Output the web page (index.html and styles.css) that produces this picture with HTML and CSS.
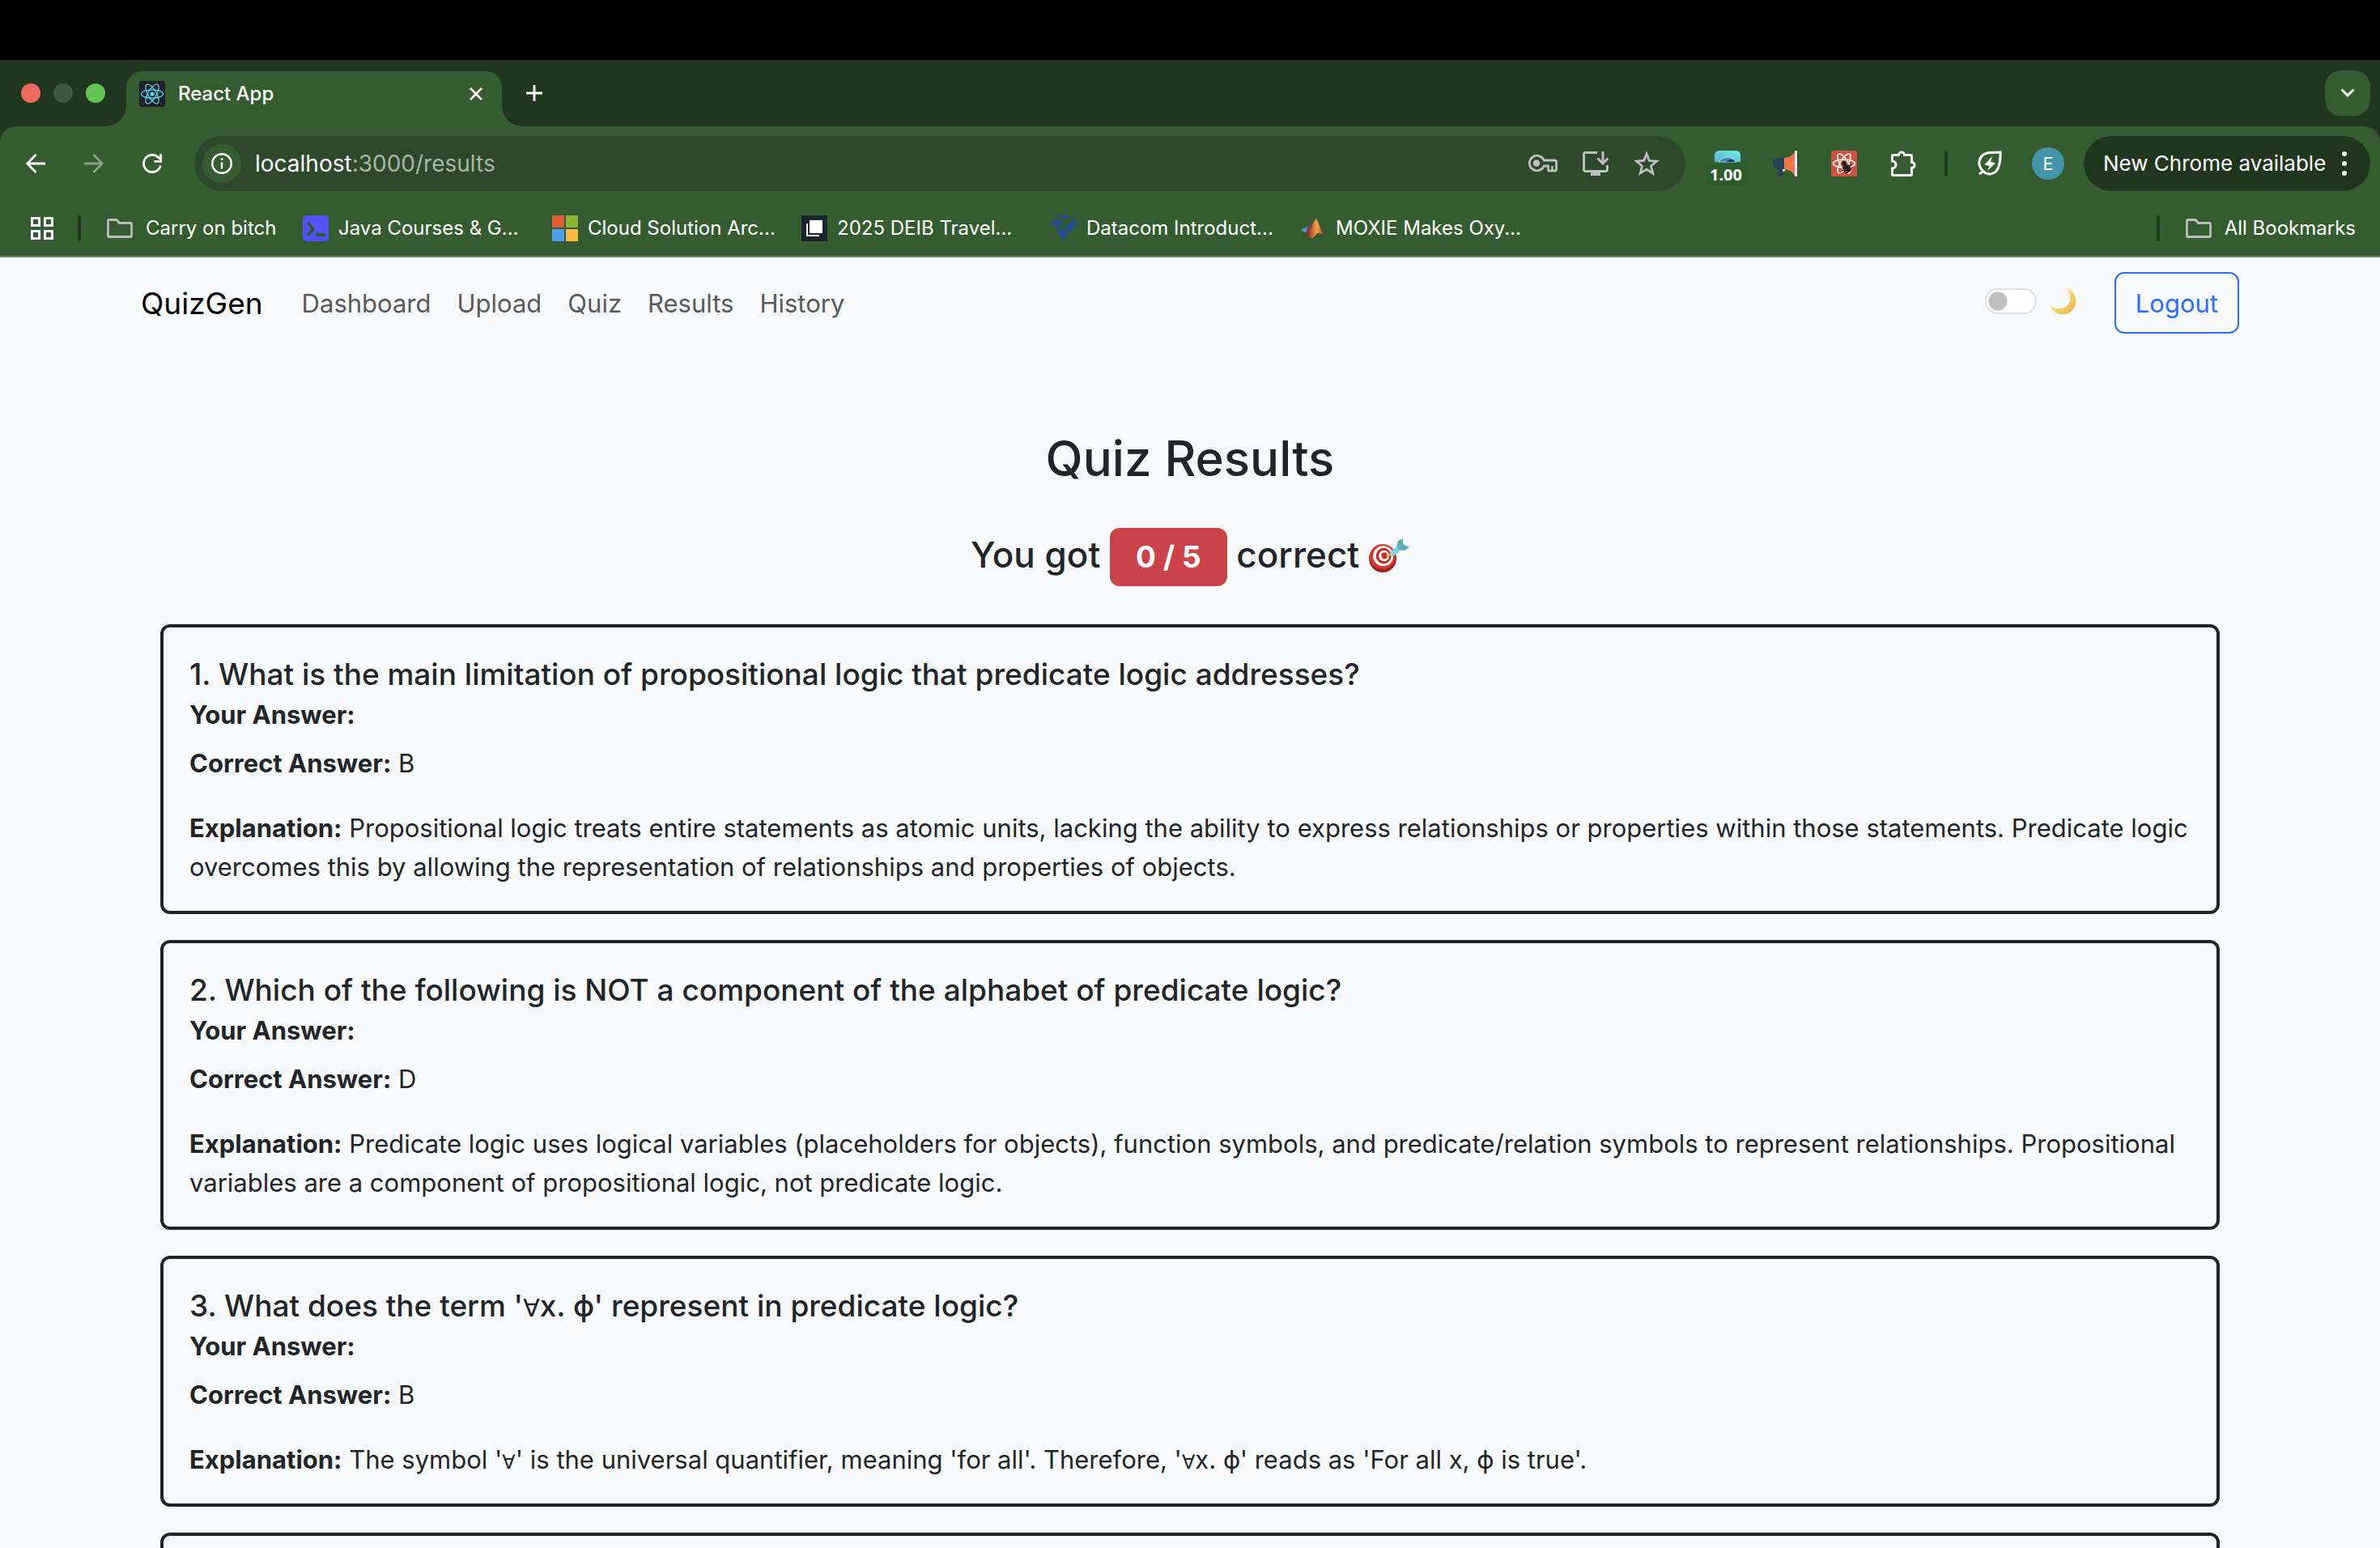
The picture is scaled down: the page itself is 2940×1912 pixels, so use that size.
FILE: index.html
```html
<!DOCTYPE html>
<html lang="en">
<head>
<meta charset="utf-8">
<meta name="viewport" content="width=device-width, initial-scale=1">
<title>React App</title>
<link rel="stylesheet" href="styles.css">
</head>
<body>
<div class="screen">
  <div class="menu-strip"></div>
  <header class="browser">
    <div class="tab-strip">
      <div class="lights">
        <span class="light light-close"></span>
        <span class="light light-min"></span>
        <span class="light light-max"></span>
      </div>
      <div class="tab">
        <svg class="icon" width="32" height="32" viewBox="0 0 32 32"><rect width="32" height="32" rx="3" fill="#20232a"/><g fill="none" stroke="#61dafb" stroke-width="1.2"><ellipse cx="16" cy="16" rx="13.5" ry="5.2"/><ellipse cx="16" cy="16" rx="13.5" ry="5.2" transform="rotate(60 16 16)"/><ellipse cx="16" cy="16" rx="13.5" ry="5.2" transform="rotate(120 16 16)"/></g><circle cx="16" cy="16" r="2.6" fill="#61dafb"/></svg>
        <span class="tab-title">React App</span>
        <button class="plain" aria-label="Close tab"><svg class="icon" width="16" height="16" viewBox="0 0 16 16"><path d="M1 1l14 14M15 1L1 15" stroke="#fff" stroke-width="2.6"/></svg></button>
      </div>
      <button class="plain new-tab" aria-label="New tab"><svg class="icon" width="20" height="20" viewBox="0 0 20 20"><path d="M10 0v20M0 10h20" stroke="#fff" stroke-width="2.8"/></svg></button>
      <button class="tab-search" aria-label="Search tabs"><svg class="icon" width="18" height="12" viewBox="0 0 18 12"><path d="M1.5 1.5L9 9l7.500-7.500" fill="none" stroke="#fff" stroke-width="3"/></svg></button>
    </div>
    <div class="toolbar">
      <div class="nav-buttons">
        <button class="plain" aria-label="Back"><svg class="icon" width="24" height="24" viewBox="0 0 24 24"><path d="M24 12H2M12.500 1L1.700 12l10.800 11" fill="none" stroke="#fff" stroke-width="2.8"/></svg></button>
        <button class="plain" aria-label="Forward"><svg class="icon" width="24" height="24" viewBox="0 0 24 24"><path d="M0 12h22M11.500 1l10.800 11-10.800 11" fill="none" stroke="#8aa184" stroke-width="2.8"/></svg></button>
        <button class="plain" aria-label="Reload"><svg class="icon" width="24" height="24" viewBox="0 0 24 24"><path d="M22.300 14.500A10.600 10.600 0 1 1 21 6.300" fill="none" stroke="#fff" stroke-width="2.8"/><path d="M22.600 0v9.400H14.500" fill="none" stroke="#fff" stroke-width="2.800"/></svg></button>
      </div>
      <div class="address">
        <span class="info"><svg class="icon" width="26" height="26" viewBox="0 0 26 26"><circle cx="13" cy="13" r="11.800" fill="none" stroke="#fff" stroke-width="2.400"/><path d="M13 11.500v8M13 6v3" stroke="#fff" stroke-width="2.400"/></svg></span>
        <span class="url">localhost<span class="url-path">:3000/results</span></span>
        <svg class="icon" width="36" height="24" viewBox="0 0 36 24"><path d="M18.800 8A9.300 9.300 0 1 0 18.800 15H24v4.500q0 1.500 1.500 1.500H32q2 0 2-2V10q0-2-2-2z" transform="translate(.5 0)" fill="none" stroke="#bdc1bd" stroke-width="2.800"/><circle cx="10" cy="11.500" r="4.300" fill="#bdc1bd"/><path d="M29.500 21v-6" stroke="#bdc1bd" stroke-width="2.500"/></svg>
        <svg class="icon" width="32" height="30" viewBox="0 0 32 30"><path d="M18 1.500H4Q1.500 1.500 1.500 4v18q0 2.500 2.500 2.500h24q2.500 0 2.500-2.500v-5" fill="none" stroke="#bdc1bd" stroke-width="3"/><path d="M10 25h12v5H10z" fill="#bdc1bd"/><path d="M25 0v14M18.500 8.500L25 15l6.500-6.500" fill="none" stroke="#bdc1bd" stroke-width="3"/></svg>
        <svg class="icon" width="32" height="32" viewBox="0 0 32 32"><path d="M16 4l3.300 8.400 9.200.7-7 5.900 2.200 9L16 23.200 8.300 28l2.200-9-7-5.900 9.200-.7z" fill="none" stroke="#bdc1bd" stroke-width="2.800"/></svg>
      </div>
      <div class="extensions">
        <span class="ext-counter"><svg class="icon" width="32" height="32" viewBox="0 0 32 32"><defs><linearGradient id="sky" x1="0" y1="1" x2="1" y2="0"><stop offset="0" stop-color="#5aaed0"/><stop offset="1" stop-color="#74efe0"/></linearGradient></defs><path d="M0 14V6q0-6 6-6h20q6 0 6 6v8z" fill="url(#sky)"/><path d="M5 14q4-5.500 11-5.500T27 14z" fill="#3f86b8" stroke="#8fdcea"/><path d="M14 14q4-4 9-2l2 2z" fill="#17306e"/></svg><span class="counter">1.00</span></span>
        <svg class="icon" width="32" height="32" viewBox="0 0 32 32"><circle cx="28.500" cy="16.500" r="3.500" fill="#2c3e58"/><path d="M14 9H7.500Q0 9.500 0 16t6 7v7q0 2 2 2h2q2 0 2-2v-7h2z" fill="#2c3e58"/><path d="M14 9q10-.5 14-9v32q-4-8-14-9z" fill="#f0764a"/><rect x="27" width="3" height="32" rx="1" fill="#e4e9f2"/><path d="M12 23h3v2.500h-3z" fill="#dfe8f5"/></svg>
        <svg class="icon" width="32" height="32" viewBox="0 0 32 32"><rect width="32" height="32" rx="2" fill="#cb5342"/><g fill="none" stroke="#fff" stroke-width="1.500"><ellipse cx="16" cy="16" rx="13.500" ry="5"/><ellipse cx="16" cy="16" rx="13.500" ry="5" transform="rotate(60 16 16)"/><ellipse cx="16" cy="16" rx="13.500" ry="5" transform="rotate(120 16 16)"/></g><path d="M17 19l6 7" stroke="#cb5342" stroke-width="9"/><g fill="#20201f"><circle cx="16" cy="16" r="2.800"/><ellipse cx="20" cy="22" rx="3.400" ry="5" transform="rotate(-42 20 22)"/></g><path d="M14 21l11-3M14 25l11-3M19 28l5-11M14 19l4 9" stroke="#20201f" stroke-width="1.200"/></svg>
        <svg class="icon" width="34" height="34" viewBox="0 0 34 34"><path d="M5 6.500h6.500a3.500 3.500 0 0 1 7 0H26q1.500 0 1.500 1.500v7.500a3.500 3.500 0 0 1 0 7V30q0 1.500-1.500 1.500H5q-1.500 0-1.500-1.500v-7a4.500 4.500 0 0 0 0-9V8q0-1.500 1.500-1.500z" fill="none" stroke="#fff" stroke-width="3"/></svg>
      </div>
      <span class="bar"></span>
      <svg class="icon leaf" width="30" height="32" viewBox="0 0 30 32"><path d="M2 29l5-3.500Q1 20 2 13 4 3 16 2.500L28 2q.5 8-1.500 16Q24 28 15.500 29 10 29 7 25.500" fill="none" stroke="#fff" stroke-width="3"/><path d="M18 7L8.500 17.500l6 1.500L12 25l10-9.500-6-1.700z" fill="#fff"/></svg>
      <span class="avatar">E</span>
      <button class="update">New Chrome available<svg class="icon" width="6" height="30" viewBox="0 0 6 30"><g fill="#fff"><circle cx="3" cy="3" r="3"/><circle cx="3" cy="15" r="3"/><circle cx="3" cy="27" r="3"/></g></svg></button>
    </div>
    <nav class="bookmarks" aria-label="Bookmarks">
      <svg class="icon apps" width="28" height="28" viewBox="0 0 28 28"><g fill="none" stroke="#fff" stroke-width="3"><path d="M1.500 1.500h9v9h-9zM17.500 1.500h9v9h-9zM1.500 17.500h9v9h-9zM17.500 17.500h9v9h-9z"/></g></svg>
      <span class="bar"></span>
      <a class="bookmark folder first" href="#"><svg class="icon" width="32" height="24" viewBox="0 0 32 24"><path d="M3 1.500h9l3.500 4H29q1.500 0 1.500 1.500v14q0 1.500-1.500 1.500H3q-1.500 0-1.500-1.500V3q0-1.500 1.500-1.500z" fill="none" stroke="#bdbdbd" stroke-width="2.800"/></svg>Carry on bitch</a>
      <a class="bookmark" href="#"><svg class="icon" width="32" height="32" viewBox="0 0 32 32"><rect width="32" height="32" rx="5" fill="#5452f6"/><path d="M6 9l7 8-7 8" fill="none" stroke="#30582f" stroke-width="3.500"/><path d="M16 24h12" stroke="#30582f" stroke-width="4"/></svg>Java Courses &amp; G...</a>
      <a class="bookmark" href="#"><svg class="icon" width="32" height="32" viewBox="0 0 32 32"><path d="M0 0h15v15H0z" fill="#e05d35"/><path d="M17 0h15v15H17z" fill="#8cb635"/><path d="M0 17h15v15H0z" fill="#4a9fea"/><path d="M17 17h15v15H17z" fill="#f5bb41"/></svg>Cloud Solution Arc...</a>
      <a class="bookmark" href="#"><svg class="icon" width="32" height="32" viewBox="0 0 32 32"><path d="M0 0h32v32H0z" fill="#18232b"/><path d="M10 6h16v16H10z" fill="#fff"/><path d="M7 10v15h15" fill="none" stroke="#fff" stroke-width="2"/></svg>2025 DEIB Travel...</a>
      <a class="bookmark" href="#"><svg class="icon" width="32" height="32" viewBox="0 0 32 32"><g fill="#244f8c"><path d="M5 2l3-2h18l-7 5q-6-3-14-3z"/><path d="M0 9q0-3 4-3 8-1 12 2l-4 5-8 2q-3-1-4-6z"/><path d="M29 4q4 3 3 7l-9 11q-2-5-6-7 5-6 12-11z"/><path d="M6 17q5 0 8-2 5 1 7 8l-3 6q-2 2-4 0z"/></g></svg>Datacom Introduct...</a>
      <a class="bookmark" href="#"><svg class="icon" width="32" height="32" viewBox="0 0 32 32"><defs><linearGradient id="peak"><stop offset="0" stop-color="#6b1c1c"/><stop offset=".5" stop-color="#e9813a"/><stop offset=".65" stop-color="#f3a545"/><stop offset="1" stop-color="#a8301c"/></linearGradient></defs><path d="M0 18l9-4 5-1-5 9z" fill="#4f9bd8"/><path d="M9 14Q15 11 20 4l-7 17-6 2z" fill="#79424c"/><path d="M7 23q4-2 7-8 3-8 6-11 4 8 9 21-5-4-8-3-4 6-8 7-2-5-6-6z" fill="url(#peak)"/></svg>MOXIE Makes Oxy...</a>
      <span class="bar push"></span>
      <a class="bookmark folder all" href="#"><svg class="icon" width="32" height="24" viewBox="0 0 32 24"><path d="M3 1.500h9l3.500 4H29q1.500 0 1.500 1.500v14q0 1.500-1.500 1.500H3q-1.500 0-1.500-1.500V3q0-1.500 1.500-1.500z" fill="none" stroke="#bdbdbd" stroke-width="2.800"/></svg>All Bookmarks</a>
    </nav>
  </header>

  <div class="page">
    <nav class="navbar" aria-label="Main">
      <a class="brand" href="#">QuizGen</a>
      <div class="links">
        <a href="#">Dashboard</a>
        <a href="#">Upload</a>
        <a href="#">Quiz</a>
        <a href="#">Results</a>
        <a href="#">History</a>
      </div>
      <label class="theme">
        <input class="switch" type="checkbox" aria-label="Dark mode">
        <svg class="icon" width="32" height="32" viewBox="0 0 32 32"><defs><linearGradient id="moon" x1="0" y1="0" x2="1" y2="1"><stop offset=".3" stop-color="#fbe48a"/><stop offset="1" stop-color="#e3b43c"/></linearGradient></defs><path d="M20 0A16.500 16.500 0 1 1 0 20.500Q7 27 16 24.500T25 13Q25.500 6 20 0z" fill="url(#moon)"/></svg>
      </label>
      <button class="logout">Logout</button>
    </nav>

    <main class="results">
      <h1>Quiz Results</h1>
      <p class="score">You got <span class="badge">0 / 5</span> correct
        <svg class="target" width="50" height="42" viewBox="0 0 50 42"><ellipse cx="17" cy="25" rx="17" ry="17" fill="#9c1f1d"/><g transform="rotate(-15 17 23)"><ellipse cx="17" cy="22.500" rx="16" ry="15.500" fill="#d43a34"/><ellipse cx="18" cy="22" rx="12.500" ry="12.500" fill="#fff"/><ellipse cx="18.500" cy="22" rx="9.500" ry="9.800" fill="#c62f2b"/><ellipse cx="19" cy="22" rx="6.500" ry="6.800" fill="#fff"/><ellipse cx="19.500" cy="22" rx="3.800" ry="4" fill="#c62f2b"/></g><path d="M22 23l8-6" stroke="#e5b12e" stroke-width="2.500"/><path d="M26 18l9-9 5 5-10 8q-4-1-4-4z" fill="#7ad6df"/><path d="M34 10l2-7 6-3v7l8 4-6 4-7-1z" fill="#62aeb9"/></svg>
      </p>

      <section class="card">
        <h2>1. What is the main limitation of propositional logic that predicate logic addresses?</h2>
        <p><strong>Your Answer:</strong></p>
        <p><strong>Correct Answer:</strong> B</p>
        <p class="why"><strong>Explanation:</strong> Propositional logic treats entire statements as atomic units, lacking the ability to express relationships or properties within those statements. Predicate logic overcomes this by allowing the representation of relationships and properties of objects.</p>
      </section>
      <section class="card">
        <h2>2. Which of the following is NOT a component of the alphabet of predicate logic?</h2>
        <p><strong>Your Answer:</strong></p>
        <p><strong>Correct Answer:</strong> D</p>
        <p class="why"><strong>Explanation:</strong> Predicate logic uses logical variables (placeholders for objects), function symbols, and predicate/relation symbols to represent relationships. Propositional variables are a component of propositional logic, not predicate logic.</p>
      </section>
      <section class="card">
        <h2>3. What does the term '<span class="math">∀</span>x. ϕ' represent in predicate logic?</h2>
        <p><strong>Your Answer:</strong></p>
        <p><strong>Correct Answer:</strong> B</p>
        <p class="why"><strong>Explanation:</strong> The symbol '<span class="math">∀</span>' is the universal quantifier, meaning 'for all'. Therefore, '<span class="math">∀</span>x. ϕ' reads as 'For all x, ϕ is true'.</p>
      </section>
      <section class="card card-next"></section>
    </main>
  </div>
</div>
</body>
</html>
```
FILE: styles.css
```css
* {
  box-sizing: border-box;
}

body {
  margin: 0;
  background: #f8f9fb;
  color: #212529;
  font-family: Inter, "Noto Sans", "DejaVu Sans", sans-serif;
  font-size: 31px;
  line-height: 48px;
}

a {
  color: inherit;
  text-decoration: none;
}

button {
  font: inherit;
  cursor: pointer;
}

.icon {
  display: block;
  flex: none;
}

.plain {
  padding: 0;
  border: 0;
  background: none;
}

.screen {
  display: flex;
  flex-direction: column;
  height: 100vh;
  overflow: hidden;
}

.menu-strip {
  flex: none;
  height: 74px;
  background: #000;
}

/* Browser frame */

.browser {
  flex: none;
  background: #20361f;
  color: #fff;
  font-size: 24px;
  line-height: 32px;
  font-weight: 500;
  white-space: nowrap;
}

.tab-strip {
  display: flex;
  align-items: center;
  height: 82px;
  padding: 0 12px 0 26px;
}

.lights {
  display: flex;
  gap: 16px;
  width: 130px;
}

.light {
  width: 24px;
  height: 24px;
  border-radius: 50%;
}

.light-close {
  background: #ed6a5e;
}

.light-min {
  background: #3f573e;
}

.light-max {
  background: #62c554;
}

.tab {
  position: relative;
  align-self: flex-end;
  display: flex;
  align-items: center;
  gap: 16px;
  width: 464px;
  height: 68px;
  padding: 0 24px 12px 16px;
  border-radius: 20px 20px 0 0;
  background: #355c30;
}

.tab::before,
.tab::after {
  content: "";
  position: absolute;
  bottom: 0;
  width: 24px;
  height: 24px;
}

.tab::before {
  right: 100%;
  background: radial-gradient(circle at 0 0, transparent 23px, #355c30 24px);
}

.tab::after {
  left: 100%;
  background: radial-gradient(circle at 100% 0, transparent 23px, #355c30 24px);
}

.tab-title {
  flex: 1;
}

.new-tab {
  margin-left: 30px;
}

.tab-search {
  display: grid;
  place-items: center;
  width: 56px;
  height: 56px;
  margin-left: auto;
  border: 0;
  border-radius: 20px;
  background: #355c30;
}

.toolbar {
  display: flex;
  align-items: center;
  height: 92px;
  padding: 0 12px 0 32px;
  border-radius: 20px 20px 0 0;
  background: #355c30;
}

.nav-buttons {
  display: flex;
  gap: 48px;
  width: 208px;
}

.address {
  flex: 1;
  display: flex;
  align-items: center;
  gap: 31px;
  height: 68px;
  padding: 0 32px 0 10px;
  border-radius: 34px;
  background: #2e482b;
}

.info {
  display: grid;
  place-items: center;
  width: 48px;
  height: 48px;
  margin-right: -14px;
  border-radius: 50%;
  background: #355c30;
}

.url {
  flex: 1;
  font-size: 28px;
  font-weight: 400;
}

.url-path {
  color: #a8b5a6;
}

.extensions {
  display: flex;
  align-items: center;
  gap: 40px;
  margin: 0 34px 0 36px;
}

.ext-counter {
  position: relative;
}

.counter {
  position: absolute;
  left: -10px;
  top: 16px;
  width: 52px;
  padding-right: 4px;
  border-radius: 8px;
  background: #2b5a2f;
  font-family: "Noto Sans", sans-serif;
  font-size: 20px;
  line-height: 28px;
  font-weight: 700;
  text-align: center;
}

.bar {
  flex: none;
  width: 4px;
  height: 32px;
  border-radius: 2px;
  background: #20361f;
}

.leaf {
  margin: 0 37px;
}

.avatar {
  width: 40px;
  height: 40px;
  border-radius: 50%;
  background: #4295a8;
  font-size: 22px;
  line-height: 40px;
  font-weight: 400;
  text-align: center;
}

.update {
  display: flex;
  align-items: center;
  justify-content: space-between;
  width: 354px;
  height: 68px;
  margin-left: 24px;
  padding: 0 29px 0 24px;
  border: 0;
  border-radius: 34px;
  background: #20361f;
  color: #fff;
  font-size: 26px;
  font-weight: 400;
}

.bookmarks {
  display: flex;
  align-items: center;
  height: 70px;
  padding: 0 30px 0 38px;
  border-bottom: 2px solid #6a8967;
  background: #355c30;
  font-weight: 400;
}

.apps {
  margin-right: 30px;
}

.bookmark {
  display: flex;
  align-items: center;
  gap: 12px;
  width: 308px;
}

.folder {
  gap: 16px;
}

.first {
  width: 242px;
  margin-left: 32px;
}

.push {
  margin-left: auto;
}

.all {
  width: auto;
  margin-left: 32px;
}

/* Site */

.page {
  flex: 1;
  min-height: 0;
  overflow: hidden;
}

.navbar {
  display: flex;
  align-items: center;
  max-width: 2640px;
  margin: 0 auto;
  padding: 18px 24px;
}

.brand {
  padding-top: 2px;
  color: #000;
  font-size: 37px;
}

.links {
  flex: 1;
  display: flex;
  gap: 32px;
  margin-left: 48px;
  padding-top: 2px;
  color: #595a5b;
}

.theme {
  display: flex;
  align-items: center;
  gap: 16px;
  margin-right: 48px;
  padding-bottom: 4px;
}

.switch {
  appearance: none;
  width: 64px;
  height: 32px;
  margin: 0;
  border: 2px solid #dee2e6;
  border-radius: 16px;
  background: radial-gradient(circle at 14px 14px, #bfbfbf 11px, transparent 12px) #fff;
}

.logout {
  height: 76px;
  padding: 2px 24px 0;
  border: 2px solid #2f6df6;
  border-radius: 12px;
  background: none;
  color: #2f6df6;
}

.results {
  max-width: 2640px;
  margin: 0 auto;
  padding: 98px 48px 0;
}

h1,
h2,
p {
  margin: 0;
}

h1 {
  font-size: 60px;
  line-height: 76px;
  font-weight: 500;
  text-align: center;
}

.score {
  margin: 43px 0 47px;
  font-size: 44px;
  line-height: 76px;
  font-weight: 500;
  text-align: center;
}

.badge {
  display: inline-block;
  padding: 0 32px;
  border-radius: 12px;
  background: #cb444a;
  color: #f8f9fa;
  font-size: 37px;
  line-height: 72px;
  font-weight: 700;
}

.target {
  vertical-align: -6px;
}

.card {
  margin-bottom: 32px;
  padding: 32px 32px 30px;
  border: 4px solid #212529;
  border-radius: 12px;
}

.card h2 {
  font-size: 37px;
  line-height: 52px;
  font-weight: 500;
}

.card p {
  margin-bottom: 12px;
}

.card .why {
  margin: 32px 0 0;
}

.card strong {
  font-weight: 700;
}

.math {
  font-family: "DejaVu Sans", sans-serif;
  font-size: 24px;
  line-height: 24px;
}

h2 .math {
  font-size: 30px;
}

.card-next {
  min-height: 358px;
}
```
